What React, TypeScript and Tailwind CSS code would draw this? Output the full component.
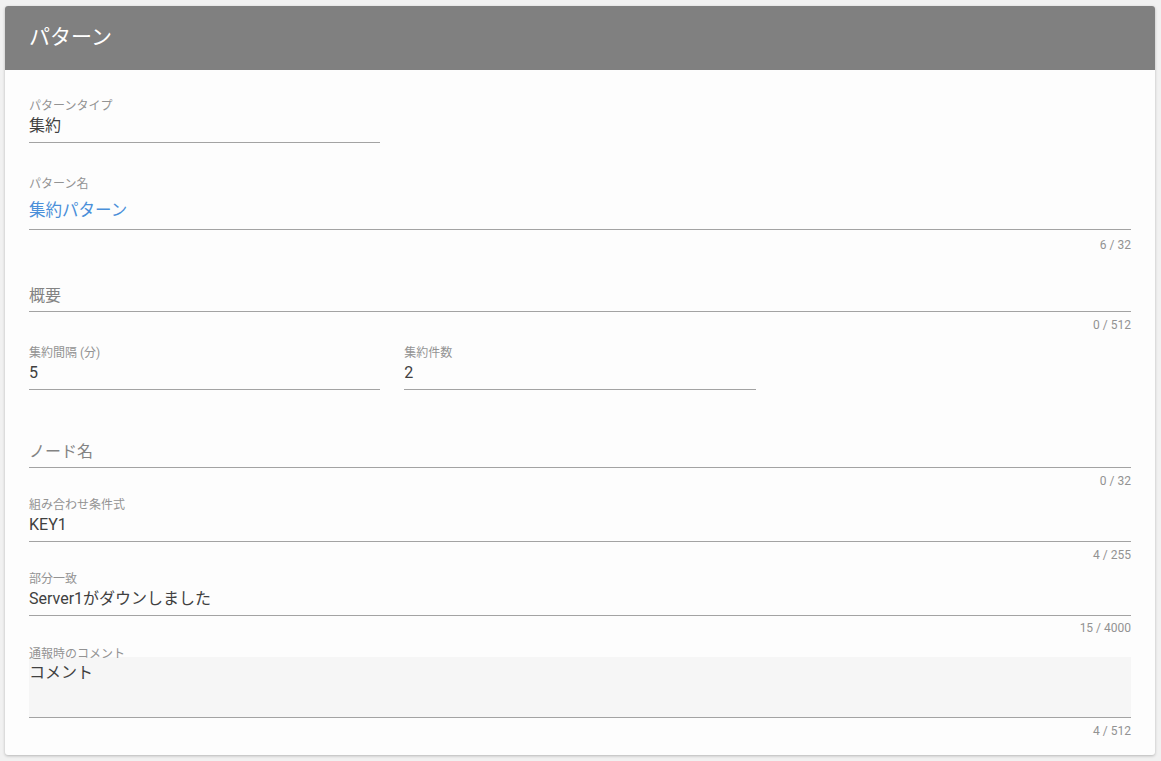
import React from "react";

const font = "font-['Roboto','Noto_Sans_CJK_JP',sans-serif]";

function Counter({ text, className = "" }: { text: string; className?: string }) {
  return (
    <div className={`h-[14px] text-right text-[12px] leading-[14px] text-[#929292] ${className}`}>
      {text}
    </div>
  );
}

function LabeledField({
  label,
  value,
  className = "",
}: {
  label: string;
  value: string;
  className?: string;
}) {
  return (
    <div className={className}>
      <div className="h-[14px] text-[12px] leading-[14px] text-[#939393]">{label}</div>
      <div className="mt-[3px] border-b border-[#a3a3a3] pb-[6px] text-[16px] leading-[20px] text-[#404040]">
        {value}
      </div>
    </div>
  );
}

function PlaceholderField({ placeholder, className = "" }: { placeholder: string; className?: string }) {
  return (
    <div className={`border-b border-[#a3a3a3] pb-[5px] text-[16px] leading-[20px] text-[#838383] ${className}`}>
      {placeholder}
    </div>
  );
}

export default function App() {
  return (
    <div className={`min-h-screen bg-[#f1f1f1] pt-[6px] pr-[6px] pb-[6px] pl-[5px] ${font}`}>
      <div className="overflow-hidden rounded-[3px] bg-[#fdfdfd] shadow-[0_1px_3px_rgba(0,0,0,0.25)]">
        <div className="flex h-16 items-center bg-[#808080] px-6 text-[21px] text-white">パターン</div>

        <div className="px-6 pt-[29px] pb-[17px]">
          <div className="grid grid-cols-3 gap-x-6">
            <LabeledField label="パターンタイプ" value="集約" />
          </div>

          <div className="mt-[34px]">
            <div className="h-[14px] text-[12px] leading-[14px] text-[#939393]">パターン名</div>
            <div className="mt-[10px] border-b border-[#a3a3a3] pb-[8px] text-[16.5px] leading-[20px] text-[#4a8fd9]">
              集約パターン
            </div>
            <Counter text="6 / 32" className="mt-[8px]" />
          </div>

          <PlaceholderField placeholder="概要" className="mt-[34px]" />
          <Counter text="0 / 512" className="mt-[6px]" />

          <div className="mt-[14px] grid grid-cols-3 gap-x-6">
            <LabeledField label="集約間隔 (分)" value="5" />
            <LabeledField label="集約件数" value="2" />
          </div>

          <PlaceholderField placeholder="ノード名" className="mt-[52px]" />
          <Counter text="0 / 32" className="mt-[6px]" />

          <LabeledField label="組み合わせ条件式" value="KEY1" className="mt-[10px]" />
          <Counter text="4 / 255" className="mt-[6px]" />

          <LabeledField label="部分一致" value="Server1がダウンしました" className="mt-[10px]" />
          <Counter text="15 / 4000" className="mt-[5px]" />

          <div className="mt-[12px]">
            <div className="h-[14px] text-[12px] leading-[14px] text-[#939393]">通報時のコメント</div>
            <div className="-mt-[4px] h-[61px] border-b border-[#a3a3a3] bg-[#f6f6f6] pt-[6px] text-[16px] leading-[20px] text-[#404040]">
              コメント
            </div>
            <Counter text="4 / 512" className="mt-[6px]" />
          </div>
        </div>
      </div>
    </div>
  );
}
